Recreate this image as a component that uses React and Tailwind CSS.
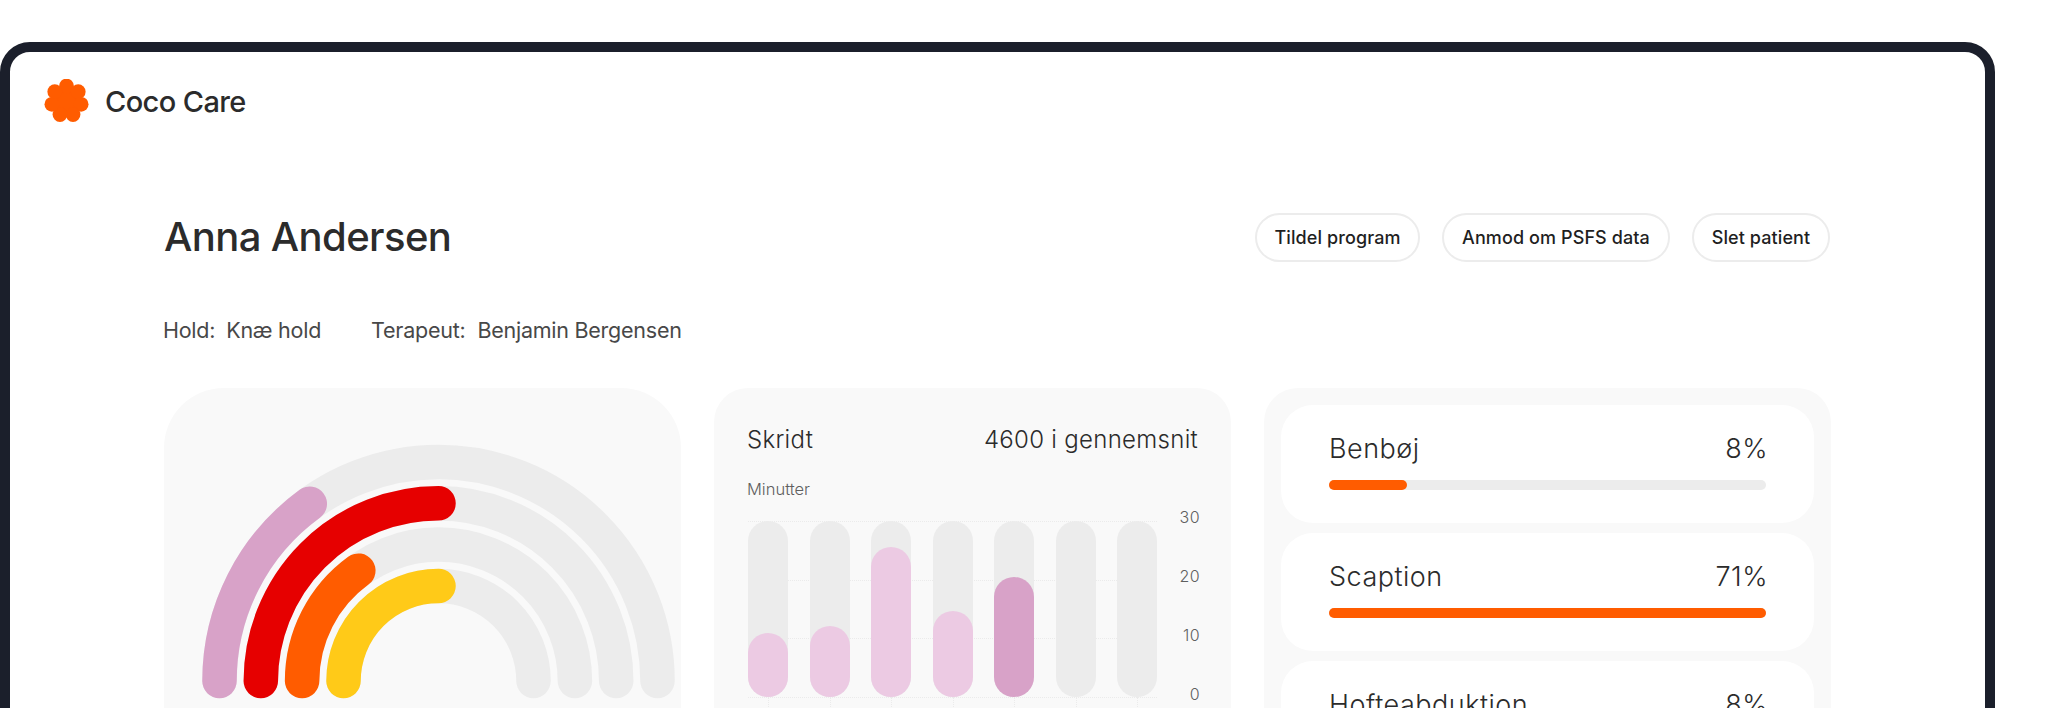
const CX = 274.5;
const CY = 293;
const rings = [
  { r: 219, color: "#d8a2c8", angle: 54 },
  { r: 177.7, color: "#e60000", angle: 90 },
  { r: 136.4, color: "#ff5c00", angle: 54 },
  { r: 95, color: "#ffca18", angle: 90 },
];

function arcPath(r, angle) {
  const a = (angle * Math.PI) / 180;
  const x = CX - r * Math.cos(a);
  const y = CY - r * Math.sin(a);
  return `M ${CX - r} ${CY} A ${r} ${r} 0 0 1 ${x} ${y}`;
}

function Logo() {
  const petals = [0, 1, 2, 3, 4, 5, 6].map((i) => {
    const a = (i * 2 * Math.PI) / 7;
    return { x: 22.5 + 15 * Math.sin(a), y: 22 - 15 * Math.cos(a) };
  });
  return (
    <svg width="45" height="44" viewBox="0 0 45 44" className="block shrink-0">
      <circle cx="22.5" cy="22" r="13" fill="#ff5c00" />
      {petals.map((p, i) => (
        <circle key={i} cx={p.x} cy={p.y} r="7.4" fill="#ff5c00" />
      ))}
    </svg>
  );
}

function Gauge() {
  return (
    <svg width="517" height="400" viewBox="0 0 517 400" className="block" fill="none">
      {rings.map((g) => (
        <path key={g.r} d={`M ${CX - g.r} ${CY} A ${g.r} ${g.r} 0 0 1 ${CX + g.r} ${CY}`} stroke="#ececec" strokeWidth="34.5" strokeLinecap="round" />
      ))}
      {rings.map((g) => (
        <path key={g.r} d={arcPath(g.r, g.angle)} stroke={g.color} strokeWidth="34.5" strokeLinecap="round" />
      ))}
    </svg>
  );
}

const bars = [
  { h: 64, on: false },
  { h: 71, on: false },
  { h: 150, on: false },
  { h: 86, on: false },
  { h: 120, on: true },
  { h: 0, on: false },
  { h: 0, on: false },
];

function Chart() {
  return (
    <div className="mt-[22px] flex justify-between pl-px">
      <div className="relative h-[177px] w-[409px]">
        <div className="absolute inset-0 flex flex-col justify-between">
          <div className="border-t border-dotted border-[#ebebeb]" />
          <div className="border-t border-dotted border-[#ebebeb]" />
          <div className="border-t border-dotted border-[#ebebeb]" />
          <div className="border-t border-dotted border-[#ebebeb]" />
        </div>
        <div className="relative flex h-[176px] justify-between">
          {bars.map((b, i) => (
            <div key={i} className="relative flex h-full w-[40px] flex-col justify-end rounded-full bg-[#ececec]">
              {b.h > 0 && (
                <div
                  className={b.on ? "w-full rounded-full bg-[#d8a2c8]" : "w-full rounded-full bg-[#eccae3]"}
                  style={{ height: b.h }}
                />
              )}
              <div className="absolute left-1/2 top-full h-[40px] border-l border-dotted border-[#ebebeb]" />
            </div>
          ))}
        </div>
      </div>
      <div className="-mr-[2px] -mt-[14px] flex h-[197px] flex-col justify-between text-right text-[16px] font-light leading-[20px] tracking-[0.4px] text-[#5f5f5f]">
        <span>30</span>
        <span>20</span>
        <span>10</span>
        <span>0</span>
      </div>
    </div>
  );
}

const exercises = [
  { name: "Benbøj", pct: "8%", w: 78 },
  { name: "Scaption", pct: "71%", w: 437 },
  { name: "Hofteabduktion", pct: "8%", w: 78 },
];

function Exercise({ name, pct, w }) {
  return (
    <div className="h-[118px] rounded-[32px] bg-white px-[48px] pt-[27px]">
      <div className="-mr-[2px] flex h-[34px] items-center justify-between text-[27px] font-light leading-[34px] tracking-[0.5px] text-[#2b2b2b]">
        <span>{name}</span>
        <span>{pct}</span>
      </div>
      <div className="mt-[14px] h-[10px] w-[437px] rounded-full bg-[#ececec]">
        <div className="h-full rounded-full bg-[#ff5c00]" style={{ width: w }} />
      </div>
    </div>
  );
}

export default function App() {
  return (
    <div className="h-[708px] overflow-hidden bg-white pt-[42px] font-['Inter',sans-serif]">
      <div className="h-[900px] w-[1995px] rounded-[30px] border-[10px] border-[#1b1f2b] bg-white pt-[27px]">
        <header className="flex h-[44px] items-center gap-4 pl-[34px]">
          <Logo />
          <span className="relative top-px text-[29px] font-medium leading-[44px] tracking-[-0.6px] text-[#2b2b2b]">Coco Care</span>
        </header>
        <main className="mt-[90px] pl-[154px] pr-[155px]">
          <div className="flex h-[49px] items-center justify-between">
            <h1 className="-mt-[2px] text-[40px] font-medium leading-[49px] tracking-[-0.6px] text-[#2b2b2b]">Anna Andersen</h1>
            <div className="flex gap-[22px]">
              <button className="h-[49px] w-[165px] rounded-full border-2 border-[#ececec] text-[18px] font-[450] tracking-[0.1px] text-[#1f1f1f]">Tildel program</button>
              <button className="h-[49px] w-[228px] rounded-full border-2 border-[#ececec] text-[18px] font-[450] tracking-[0.1px] text-[#1f1f1f]">Anmod om PSFS data</button>
              <button className="h-[49px] w-[138px] rounded-full border-2 border-[#ececec] text-[18px] font-[450] tracking-[0.1px] text-[#1f1f1f]">Slet patient</button>
            </div>
          </div>
          <div className="mt-[54px] -ml-px flex h-[28px] items-center gap-[50px] text-[21.5px] leading-[28px] tracking-[-0.25px] text-[#484848]">
            <div className="flex gap-[11px]"><span>Hold:</span><span>Knæ hold</span></div>
            <div className="flex gap-[12px]"><span>Terapeut:</span><span>Benjamin Bergensen</span></div>
          </div>
          <div className="mt-[44px] grid grid-cols-[517px_517px_1fr] gap-[33px]">
            <section className="h-[500px] rounded-[60px] bg-[#f9f9f9]">
              <Gauge />
            </section>
            <section className="h-[500px] rounded-[34px] bg-[#f9f9f9] pl-[33px] pr-[33px] pt-[36px]">
              <div className="flex h-[32px] items-center justify-between text-[24px] font-light leading-[32px] tracking-[0.3px] text-[#2b2b2b]">
                <span>Skridt</span>
                <span>4600 i gennemsnit</span>
              </div>
              <div className="mt-[23px] text-[16.5px] font-light leading-[20px] text-[#5f5f5f]">Minutter</div>
              <Chart />
            </section>
            <section className="flex h-[500px] flex-col gap-[10px] rounded-[34px] bg-[#f9f9f9] p-[17px]">
              {exercises.map((e) => (
                <Exercise key={e.name} {...e} />
              ))}
            </section>
          </div>
        </main>
      </div>
    </div>
  );
}
